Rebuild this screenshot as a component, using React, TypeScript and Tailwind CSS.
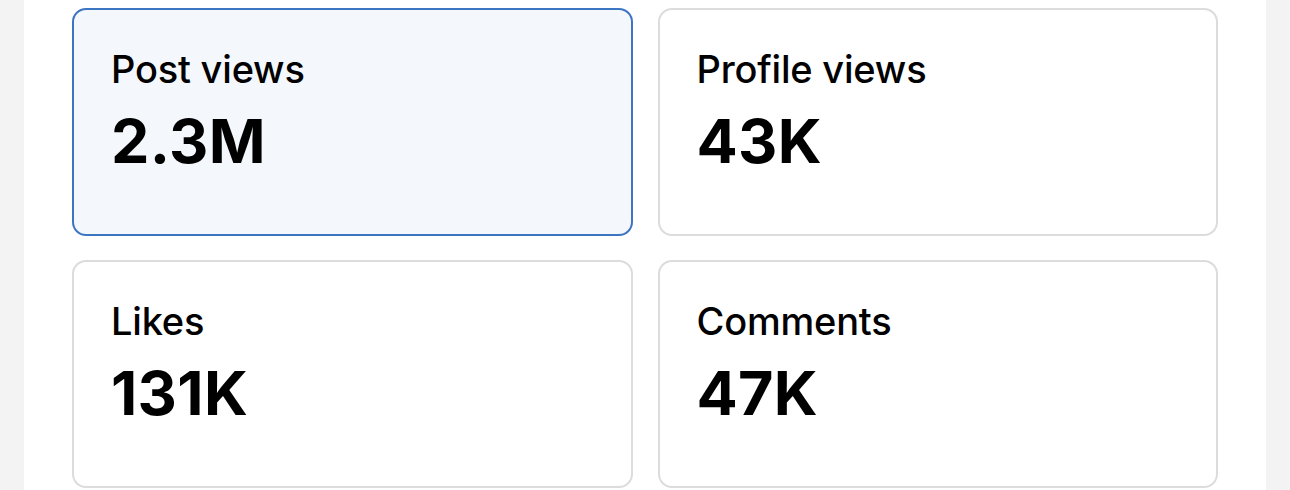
import React from "react";

const stats = [
  { label: "Post views", value: "2.3M", active: true },
  { label: "Profile views", value: "43K", active: false },
  { label: "Likes", value: "131K", active: false },
  { label: "Comments", value: "47K", active: false },
];

export default function App() {
  return (
    <div className="min-h-[490px] bg-[#f3f3f3] font-['Inter',sans-serif]">
      <div className="ml-[24px] w-[1242px] min-h-[490px] bg-white px-[48px] pt-[8px]">
        {/* Stat cards */}
        <div className="grid grid-cols-2 gap-x-[25px] gap-y-[24px]">
          {stats.map((s) => (
            <div
              key={s.label}
              className={
                s.active
                  ? "h-[228px] rounded-[14px] border-2 border-[#3c75c2] bg-[#f4f8fc] px-[37px] pt-[36px]"
                  : "h-[228px] rounded-[14px] border-2 border-[#dcdcdc] bg-white px-[37px] pt-[36px]"
              }
            >
              <div className="text-[38px] leading-[46px] font-medium text-black tracking-[-0.2px]">
                {s.label}
              </div>
              <div className="mt-[12px] text-[61px] leading-[74px] font-bold text-black tracking-[0.3px]">
                {s.value}
              </div>
            </div>
          ))}
        </div>
      </div>
    </div>
  );
}
